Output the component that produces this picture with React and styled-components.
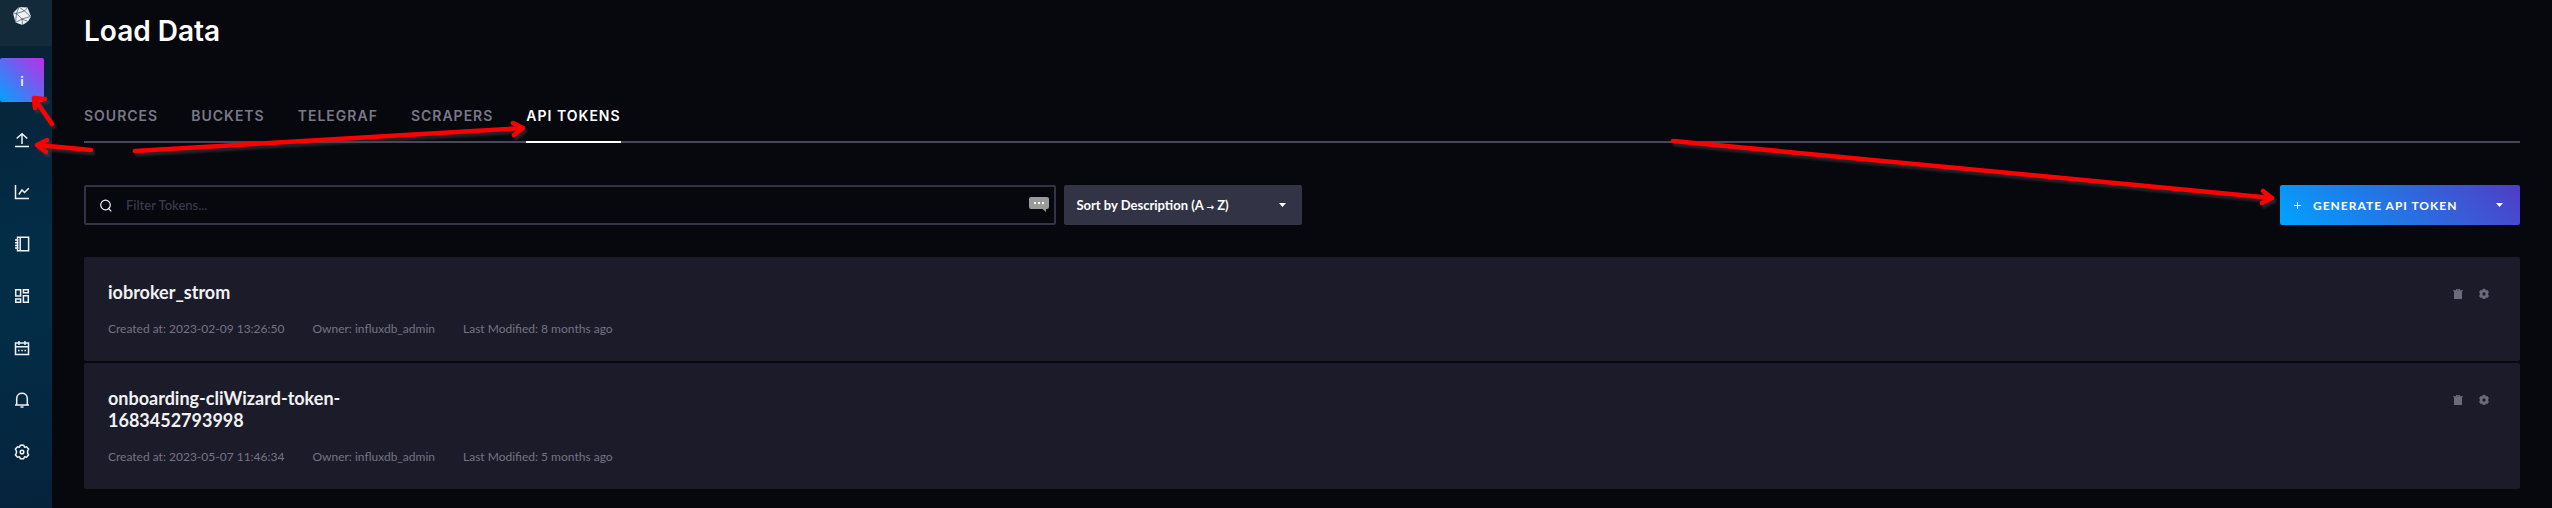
import styled, { createGlobalStyle, css } from "styled-components";

const GlobalStyle = createGlobalStyle`
  * {
    box-sizing: border-box;
  }
  body {
    margin: 0;
    background: #07070e;
    color: #fff;
    font-family: Lato, "Open Sans", sans-serif;
  }
  button, input {
    font-family: inherit;
    margin: 0;
  }
`;

const Page = styled.div`
  position: relative;
  display: flex;
  min-height: 100vh;
  overflow: hidden;
`;

const Sidebar = styled.nav`
  flex: none;
  width: 52px;
  background: linear-gradient(170deg, #08202f 0%, #032c47 45%, #032c47 65%, #06233b 100%);
`;

const LogoLink = styled.a`
  display: flex;
  align-items: center;
  height: 46px;
  padding: 0 0 14px 12px;
  background: #132a3b;
`;

const Avatar = styled.a`
  display: flex;
  align-items: center;
  justify-content: center;
  width: 44px;
  height: 44px;
  margin: 12px 0 16px;
  border-radius: 2px;
  background: linear-gradient(45deg, #00a3ff, #be2ee4);
  color: #fff;
  font-size: 14px;
  font-weight: 600;
  text-decoration: none;
`;

const NavList = styled.ul`
  display: flex;
  flex-direction: column;
  gap: 8px;
  margin: 0;
  padding: 0;
  list-style: none;
`;

const NavLink = styled.a`
  display: flex;
  align-items: center;
  justify-content: center;
  width: 44px;
  height: 44px;
  color: #f1f1f3;
`;

const Main = styled.main`
  flex: 1;
  min-width: 0;
  padding: 13px 32px 18px;
`;

const Title = styled.h1`
  margin: 0 0 51px;
  font-family: Inter, sans-serif;
  font-size: 28px;
  line-height: 36px;
  font-weight: 600;
`;

const Tabs = styled.div`
  display: flex;
  gap: 33px;
  margin-bottom: 42px;
  box-shadow: inset 0 -2px #4a475c;
`;

const Tab = styled.a`
  padding: 7px 0 16px;
  border-bottom: 2px solid ${({ $active }) => ($active ? "#fff" : "transparent")};
  color: ${({ $active }) => ($active ? "#fff" : "#7a7888")};
  font-family: Inter, sans-serif;
  font-size: 14px;
  line-height: 18px;
  font-weight: 600;
  letter-spacing: 1px;
  text-decoration: none;
`;

const Toolbar = styled.div`
  display: flex;
  gap: 8px;
  margin-bottom: 32px;
`;

const SearchBox = styled.label`
  display: flex;
  align-items: center;
  gap: 14px;
  flex: 0 1 calc(40% - 2px);
  height: 40px;
  padding: 0 5px 0 14px;
  border: 2px solid #333346;
  border-radius: 2px;
`;

const SearchInput = styled.input`
  flex: 1;
  min-width: 0;
  padding: 0;
  border: 0;
  outline: 0;
  background: none;
  color: #fff;
  font-size: 13px;
  font-weight: 500;

  &::placeholder {
    color: #3c3c4c;
    opacity: 1;
  }
`;

const buttonBase = css`
  display: flex;
  align-items: center;
  height: 40px;
  border: 0;
  border-radius: 2px;
  color: #fff;
  font-weight: 700;
  white-space: nowrap;
`;

const SortButton = styled.button`
  ${buttonBase}
  justify-content: space-between;
  width: 238px;
  padding: 0 16px 0 12px;
  background: #333346;
  font-size: 13px;
`;

const SortArrow = styled.span`
  font-family: "DejaVu Sans", sans-serif;
  font-size: 9px;
`;

const GenerateButton = styled.button`
  ${buttonBase}
  gap: 12px;
  width: 240px;
  margin-left: auto;
  padding: 0 17px 0 14px;
  background: linear-gradient(45deg, #00a3ff, #513cc6);
  font-size: 12px;
  letter-spacing: 1px;

  svg:last-child {
    margin-left: auto;
  }
`;

const TokenList = styled.ul`
  display: flex;
  flex-direction: column;
  gap: 2px;
  margin: 0;
  padding: 0;
  list-style: none;
`;

const TokenCard = styled.li`
  display: flex;
  justify-content: space-between;
  align-items: flex-start;
  padding: 24px 23px 23px 24px;
  border-radius: 2px;
  background: #1c1b2a;
`;

const TokenName = styled.h2`
  max-width: 280px;
  margin: 0 0 17px;
  color: #f1f1f3;
  font-size: 18px;
  line-height: 22px;
  font-weight: 700;
`;

const Meta = styled.div`
  display: flex;
  gap: 28px;
  color: #757383;
  font-size: 12px;
  line-height: 18px;
`;

const Actions = styled.div`
  display: flex;
`;

const IconButton = styled.button`
  display: flex;
  align-items: center;
  justify-content: center;
  width: 26px;
  height: 26px;
  padding: 0;
  border: 0;
  background: none;
  color: #6c6a7c;
`;

const Arrows = styled.svg`
  position: absolute;
  top: 0;
  ${({ $side }) => $side}: 0;
  pointer-events: none;
  fill: none;
  stroke: #f00;
  stroke-width: 4.5;
  stroke-linecap: round;
  stroke-linejoin: round;
  filter: drop-shadow(2px 3px 1px rgba(70, 70, 70, 0.5));
`;

const Icon = ({ size = 16, children }) => (
  <svg
    width={size}
    height={size}
    viewBox="0 0 16 16"
    fill="none"
    stroke="currentColor"
    strokeWidth="1.5"
    aria-hidden="true"
  >
    {children}
  </svg>
);

const Logo = () => (
  <svg width="20" height="20" viewBox="0 0 20 20" aria-hidden="true">
    <path d="M7 1 L15.500 1.500 L19 10.500 L16 15.500 L10.500 19 L3.500 16.500 L1 7 Z" fill="#eef2f4" />
    <path
      d="M7 1 L12.500 5 L15.500 1.500 M12.500 5 L18.500 10.500 L10 13 L4.500 7.500 L12.500 5 M4.500 7.500 L1 7 M4.500 7.500 L3.500 16.500 L10 13 L16 15.500 M10 13 L10.500 19 M4.500 7.500 L7 1"
      fill="none"
      stroke="#3b4d5b"
      strokeWidth="0.7"
    />
  </svg>
);

const Caret = () => (
  <svg width="7" height="4" viewBox="0 0 7 4" aria-hidden="true">
    <path d="M0 0 H7 L3.500 4 Z" fill="currentColor" />
  </svg>
);

const GEAR =
  "M8 1 L9.800 1.300 L10.500 3.200 L12.500 2.800 L14.600 5.200 L13.600 7 V9 L14.600 10.800 L12.500 13.200 L10.500 12.800 L9.600 14.800 H6.400 L5.500 12.800 L3.500 13.200 L1.400 10.800 L2.400 9 V7 L1.400 5.200 L3.500 2.800 L5.500 3.200 L6.200 1.300 Z";

const navItems = [
  { label: "Load Data", shape: <path d="M8 12 V2 M2.700 6.500 L8 1.800 L13.300 6.500 M1 14.500 H15" /> },
  { label: "Data Explorer", shape: <path d="M1.500 1 V14.500 H15 M4.800 10.500 L8 6 L10.500 8.500 L14.800 4.300" /> },
  {
    label: "Notebooks",
    shape: <path d="M3.500 1.300 H14.600 V14.700 H3.500 Z M6.200 1.300 V14.700 M1 4 H4.500 M1 6.700 H4.500 M1 9.400 H4.500 M1 12.100 H4.500" />,
  },
  {
    label: "Dashboards",
    shape: <path d="M1.700 1.700 H6.600 V8 H1.700 Z M9.400 1.700 H14.300 V4.800 H9.400 Z M9.400 7.800 H14.300 V14.300 H9.400 Z M1.700 11 H6.600 V14.300 H1.700 Z" />,
  },
  {
    label: "Tasks",
    shape: <path d="M1.500 3 H14.500 V14.500 H1.500 Z M1.500 6.800 H14.500 M5 1 V5 M11 1 V5 M4 10.500 H5.500 M7.300 10.500 H8.800 M10.500 10.500 H12" />,
  },
  { label: "Alerts", shape: <path d="M1 13 H15 M2.700 13 V6.500 C2.700 -0.500 13.300 -0.500 13.300 6.500 V13 M6.500 15 H9.500" /> },
  {
    label: "Settings",
    shape: (
      <>
        <path d={GEAR} />
        <circle cx="8" cy="8" r="1.800" />
      </>
    ),
  },
];

const tabs = ["SOURCES", "BUCKETS", "TELEGRAF", "SCRAPERS", "API TOKENS"];

const tokens = [
  { name: "iobroker_strom", created: "2023-02-09 13:26:50", modified: "8 months ago" },
  { name: "onboarding-cliWizard-token-1683452793998", created: "2023-05-07 11:46:34", modified: "5 months ago" },
];

const Token = ({ name, created, modified }) => (
  <TokenCard>
    <div>
      <TokenName>{name}</TokenName>
      <Meta>
        <span>Created at: {created}</span>
        <span>Owner: influxdb_admin</span>
        <span>Last Modified: {modified}</span>
      </Meta>
    </div>
    <Actions>
      <IconButton aria-label={`Delete ${name}`}>
        <svg width="10" height="10" viewBox="0 0 10 10" fill="currentColor" aria-hidden="true">
          <path d="M3 0 H7 V1.200 H10 V2.300 H9 V10 H1 V2.300 H0 V1.200 H3 Z" />
          <path d="M4 0.700 H6 V1.300 H4 Z" fill="#1c1b2a" />
        </svg>
      </IconButton>
      <IconButton aria-label={`Configure ${name}`}>
        <svg width="12" height="12" viewBox="0 0 16 16" fill="currentColor" aria-hidden="true">
          <path d={GEAR} />
          <circle cx="8" cy="8" r="2.200" fill="#1c1b2a" />
        </svg>
      </IconButton>
    </Actions>
  </TokenCard>
);

const App = () => {
  return (
    <>
      <GlobalStyle />
      <Page>
        <Sidebar>
          <LogoLink href="#home" aria-label="Home">
            <Logo />
          </LogoLink>
          <Avatar href="#user">i</Avatar>
          <NavList>
            {navItems.map(({ label, shape }) => (
              <li key={label}>
                <NavLink href="#nav" aria-label={label}>
                  <Icon>{shape}</Icon>
                </NavLink>
              </li>
            ))}
          </NavList>
        </Sidebar>
        <Main>
          <Title>Load Data</Title>
          <Tabs>
            {tabs.map((tab) => (
              <Tab key={tab} href="#tab" $active={tab === "API TOKENS"}>
                {tab}
              </Tab>
            ))}
          </Tabs>
          <Toolbar>
            <SearchBox>
              <svg width="12" height="13" viewBox="0 0 12 13" fill="none" stroke="#f1f1f3" strokeWidth="1.200" aria-hidden="true">
                <circle cx="5.500" cy="6" r="4.800" />
                <path d="M8 9 L11.300 12.300" />
              </svg>
              <SearchInput type="text" placeholder="Filter Tokens..." aria-label="Filter Tokens" />
              <svg width="20" height="18" viewBox="0 0 20 18" aria-hidden="true">
                <path d="M2 1 H18 Q20 1 20 3 V11 Q20 13 18 13 H17 V16 L13.500 13 H2 Q0 13 0 11 V3 Q0 1 2 1 Z" fill="#9a9a9a" />
                <path d="M5 7 H7 M9 7 H11 M13 7 H15" stroke="#fff" strokeWidth="2" />
              </svg>
            </SearchBox>
            <SortButton>
              <span>
                Sort by Description (A <SortArrow>→</SortArrow> Z)
              </span>
              <Caret />
            </SortButton>
            <GenerateButton>
              <svg width="7" height="7" viewBox="0 0 7 7" stroke="currentColor" aria-hidden="true">
                <path d="M0 3.500 H7 M3.500 0 V7" />
              </svg>
              GENERATE API TOKEN
              <Caret />
            </GenerateButton>
          </Toolbar>
          <TokenList>
            {tokens.map((token) => (
              <Token key={token.name} {...token} />
            ))}
          </TokenList>
        </Main>
        <Arrows $side="left" width="540" height="170" aria-hidden="true">
          <path d="M52 124 L34 98 M45 99 L34 98 L35 108" />
          <path d="M91 150 L37 145 M47 140 L37 145 L46 152" />
          <path d="M135 151 L523 128 M513 123 L523 128 L514 135" />
        </Arrows>
        <Arrows $side="right" width="900" height="220" aria-hidden="true">
          <path d="M21 141 L620 198 M611 191 L620 198 L610 203" />
        </Arrows>
      </Page>
    </>
  );
};

export default App;
